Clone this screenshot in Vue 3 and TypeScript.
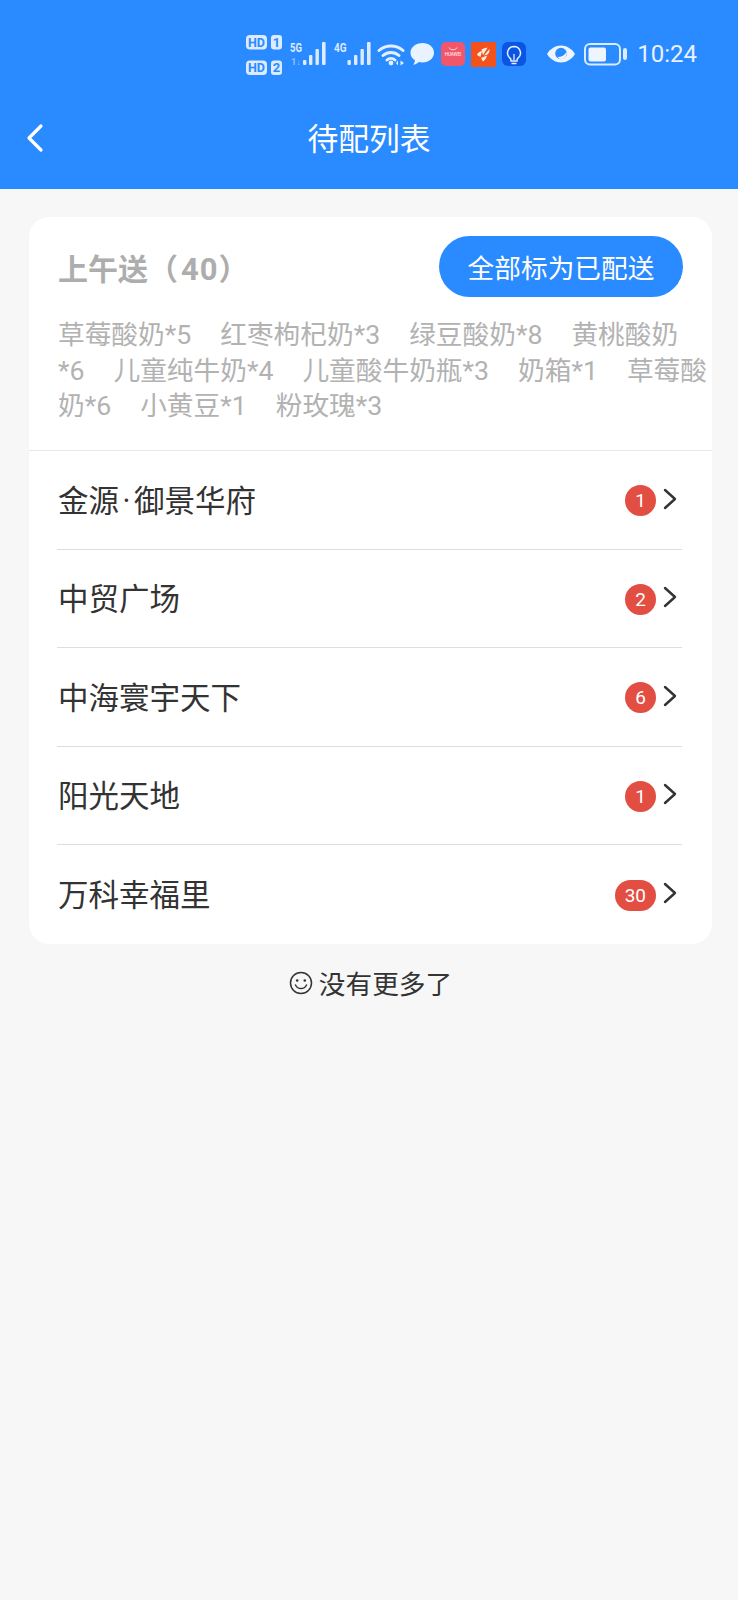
<script setup lang="ts">
interface Place {
  name: string
  count: number
}

const goods: string[] = [
  '草莓酸奶*5',
  '红枣枸杞奶*3',
  '绿豆酸奶*8',
  '黄桃酸奶*6',
  '儿童纯牛奶*4',
  '儿童酸牛奶瓶*3',
  '奶箱*1',
  '草莓酸奶*6',
  '小黄豆*1',
  '粉玫瑰*3',
]

const places: Place[] = [
  { name: '金源·御景华府', count: 1 },
  { name: '中贸广场', count: 2 },
  { name: '中海寰宇天下', count: 6 },
  { name: '阳光天地', count: 1 },
  { name: '万科幸福里', count: 30 },
]
</script>

<template>
  <div class="page">
    <header class="header">
      <div class="status-bar">
        <svg class="status-icons" width="390" height="48" viewBox="240 30 390 48">
          <!-- sim badges -->
          <rect x="246" y="35" width="21" height="14.500" rx="4" fill="#dcebff" />
          <text x="256.500" y="46.500" class="hd" textLength="17" lengthAdjust="spacingAndGlyphs">HD</text>
          <rect x="271" y="35" width="11" height="14.500" rx="3" fill="#dcebff" />
          <text x="276.500" y="46.500" class="hd">1</text>
          <rect x="246" y="60.500" width="21" height="14.500" rx="4" fill="#dcebff" />
          <text x="256.500" y="72" class="hd" textLength="17" lengthAdjust="spacingAndGlyphs">HD</text>
          <rect x="271" y="60.500" width="11" height="14.500" rx="3" fill="#dcebff" />
          <text x="276.500" y="72" class="hd">2</text>

          <!-- signal -->
          <text x="290" y="52" class="net" textLength="12" lengthAdjust="spacingAndGlyphs">5G</text>
          <text x="291" y="64.500" class="net dim" textLength="10" lengthAdjust="spacingAndGlyphs">1↓</text>
          <g fill="#dcebff">
            <rect x="303" y="60" width="3.400" height="5" rx="1" />
            <rect x="309" y="55" width="3.400" height="10" rx="1" />
            <rect x="315.500" y="49" width="3.400" height="16" rx="1" />
            <rect x="322" y="42" width="3.600" height="23" rx="1" />
          </g>
          <text x="334" y="52" class="net" textLength="12.500" lengthAdjust="spacingAndGlyphs">4G</text>
          <g fill="#dcebff">
            <rect x="347.500" y="60" width="3.400" height="5" rx="1" />
            <rect x="354" y="55" width="3.400" height="10" rx="1" />
            <rect x="360.500" y="49" width="3.400" height="16" rx="1" />
            <rect x="367" y="42" width="3.600" height="23" rx="1" />
          </g>

          <!-- wifi -->
          <g fill="none" stroke="#e4f0ff" stroke-width="3" stroke-linecap="round">
            <path d="M379 50.500a18 18 0 0 1 24 0" />
            <path d="M383 55.500a12 12 0 0 1 16 0" />
            <path d="M387 60a6 6 0 0 1 8 0" />
          </g>
          <circle cx="391" cy="63" r="2.400" fill="#e4f0ff" />
          <path d="M398 60.500v5l-2-2.500zM400.500 60.500l3.500 2.500-3.500 2.500z" fill="#e4f0ff" />

          <!-- message bubble -->
          <path
            d="M422.500 43c6.400 0 11.500 4.200 11.500 9.700s-5.100 9.700-11.500 9.700c-1.300 0-2.500-.2-3.700-.5-1.500 1.400-3.400 2.400-5.600 2.900 1-1.200 1.600-2.700 1.700-4.500-2.800-1.800-4.400-4.500-4.400-7.600 0-5.500 5.600-9.700 12-9.700z"
            fill="#e9f3ff"
          />

          <!-- huawei store -->
          <rect x="441" y="42" width="24" height="24" rx="5" fill="#f2566a" />
          <path d="M449 47.500c1 3 7 3 8 0" fill="none" stroke="#ffe3e6" stroke-width="1" />
          <text x="453" y="56" class="brand">HUAWEI</text>

          <!-- orange app -->
          <rect x="471" y="42" width="25" height="25" fill="#f4521b" />
          <g fill="#ffeee6">
            <path d="M477 55c.5-2 2.500-3.500 5-4l-1.500 6z" />
            <path d="M481.500 49.500c2-1.200 4-1.800 6-1.800l-4.500 7.300z" />
            <path d="M484 55.500l5.500-6.500c.2 2-.5 4-2 5.500z" />
            <path d="M481 58l6-2.500c-.5 2.500-2 4.500-4 6z" />
          </g>

          <!-- blue bulb app -->
          <rect x="502" y="42" width="24" height="24" rx="6" fill="#0b55e4" />
          <path
            d="M514 46.500a6.500 6.500 0 0 1 4 11.600c-.7.600-1 1.200-1 2v.9h-6v-.9c0-.8-.3-1.400-1-2a6.500 6.500 0 0 1 4-11.600z"
            fill="none"
            stroke="#e4f0ff"
            stroke-width="1.500"
          />
          <path d="M511.500 63.500h5M514 54v6" fill="none" stroke="#e4f0ff" stroke-width="1.300" />

          <!-- eye -->
          <path d="M547 54c3.500-5.500 8.500-8.500 14-8.500s10.500 3 14 8.500c-3.500 5.500-8.500 8.500-14 8.500s-10.500-3-14-8.500z" fill="#eef5ff" />
          <circle cx="561" cy="53.500" r="5.800" fill="#2a8aff" />
          <path d="M561 59.300a5.800 5.800 0 0 0 5.500-7.500c-1.500 3.500-5 5.500-9 5 1 1.500 2 2.500 3.500 2.500z" fill="#eef5ff" />

          <!-- battery -->
          <rect x="585" y="44" width="35" height="20.500" rx="5" fill="none" stroke="#dcebff" stroke-width="2" />
          <rect x="588.500" y="47.500" width="17.500" height="14" rx="2" fill="#eef5ff" />
          <rect x="623" y="48" width="4" height="12" rx="2" fill="#dcebff" />
        </svg>
        <span class="time">10:24</span>
      </div>
      <div class="nav">
        <svg class="back" width="18" height="30" viewBox="0 0 18 30">
          <path d="M15 3 3 15l12 12" fill="none" stroke="#fff" stroke-width="3.200" stroke-linecap="round" stroke-linejoin="round" />
        </svg>
        <span class="nav-title">待配列表</span>
      </div>
    </header>

    <main class="content">
      <section class="card">
        <div class="card-head">
          <div class="title-row">
            <span class="title">上午送（<span class="title-count">40</span>）</span>
            <button class="mark-btn" type="button">全部标为已配送</button>
          </div>
          <p class="goods">
            <span v-for="(item, i) in goods" :key="i" class="good">{{ item }}</span>
          </p>
        </div>
        <ul class="places">
          <li v-for="place in places" :key="place.name" class="place">
            <span class="place-name">
              <template v-for="(part, i) in place.name.split('·')" :key="i"><span v-if="i" class="dot">·</span>{{ part }}</template>
            </span>
            <span class="place-right">
              <span class="badge">{{ place.count }}</span>
              <svg class="chevron" width="14" height="22" viewBox="0 0 14 22">
                <path d="M2 2l10 9-10 9" fill="none" stroke="#333" stroke-width="2.400" stroke-linecap="round" stroke-linejoin="round" />
              </svg>
            </span>
          </li>
        </ul>
      </section>

      <div class="no-more">
        <svg width="24" height="24" viewBox="0 0 24 24">
          <circle cx="12" cy="12" r="10.500" fill="none" stroke="#333" stroke-width="1.500" />
          <circle cx="8.200" cy="9.500" r="1.300" fill="#333" />
          <circle cx="15.800" cy="9.500" r="1.300" fill="#333" />
          <path d="M6.500 14c1.200 2.400 3.200 3.600 5.500 3.600s4.300-1.200 5.500-3.600" fill="none" stroke="#333" stroke-width="1.500" stroke-linecap="round" />
        </svg>
        <span>没有更多了</span>
      </div>
    </main>
  </div>
</template>

<style>
html,
body {
  margin: 0;
  background: #f7f7f7;
}
</style>

<style scoped>
.page {
  min-height: 1600px;
  background: #f7f7f7;
  font-family: "Roboto", "Noto Sans CJK SC", sans-serif;
  color: #333;
}

.header {
  background: #2a8aff;
  height: 189px;
}

.status-bar {
  height: 88px;
  box-sizing: border-box;
  padding: 30px 41px 10px 0;
  display: flex;
  justify-content: flex-end;
  align-items: center;
  gap: 7px;
}

.status-icons {
  display: block;
  flex-shrink: 0;
}

.hd {
  font: 700 13px "Roboto", sans-serif;
  fill: #2a8aff;
  text-anchor: middle;
}

.net {
  font: 700 12.500px "Roboto", sans-serif;
  fill: #dcebff;
}

.net.dim {
  font-size: 9px;
  fill: #8dbfff;
}

.brand {
  font: 400 4.500px "Roboto", sans-serif;
  fill: #fff;
  text-anchor: middle;
}

.time {
  font: 400 24px "Roboto", sans-serif;
  color: #e8f2ff;
}

.nav {
  height: 100px;
  display: flex;
  align-items: center;
  justify-content: center;
  position: relative;
}

.back {
  position: absolute;
  left: 26px;
  top: 35px;
}

.nav-title {
  font-size: 30.800px;
  color: #fff;
  padding-bottom: 4px;
}

.content {
  padding: 28px 26px 0 29px;
}

.card {
  background: #fff;
  border-radius: 20px;
  overflow: hidden;
}

.card-head {
  padding: 19px 0 25px 29px;
  border-bottom: 1px solid #e8e8e8;
}

.title-row {
  display: flex;
  justify-content: space-between;
  align-items: center;
  padding-right: 29px;
}

.title {
  font-size: 30px;
  font-weight: 700;
  color: #adadad;
}

.title-count {
  font-size: 31px;
  letter-spacing: 1px;
  margin-left: 3px;
}

.mark-btn {
  width: 244px;
  height: 61px;
  padding: 0;
  border: none;
  border-radius: 31px;
  background: #2a8aff;
  color: #fff;
  font: inherit;
  font-size: 26.700px;
}

.goods {
  margin: 21px 0 0;
  font-size: 26.700px;
  line-height: 35.700px;
  color: #b2b2b2;
}

.good {
  margin-right: 29px;
}

.places {
  list-style: none;
  margin: 0;
  padding: 0 30px 0 28px;
}

.place {
  height: 98.500px;
  display: flex;
  align-items: center;
  justify-content: space-between;
  border-bottom: 1px solid #dedede;
  box-sizing: border-box;
}

.place:last-child {
  border-bottom: none;
}

.place-name {
  font-size: 30.500px;
  padding-left: 1px;
  padding-bottom: 2px;
}

.dot {
  margin: 0 3.500px;
}

.place-right {
  display: flex;
  align-items: center;
  gap: 7px;
  padding-top: 2px;
  padding-right: 5px;
}

.badge {
  min-width: 31px;
  height: 31px;
  padding: 0 10px;
  box-sizing: border-box;
  border-radius: 16px;
  background: #e34e43;
  color: #fff;
  font: 400 19px/31px "Roboto", sans-serif;
  text-align: center;
}

.chevron {
  margin-bottom: 4px;
}

.no-more {
  height: 80px;
  display: flex;
  align-items: center;
  justify-content: center;
  gap: 6px;
  font-size: 26.700px;
  padding-bottom: 2px;
  box-sizing: border-box;
}
</style>
